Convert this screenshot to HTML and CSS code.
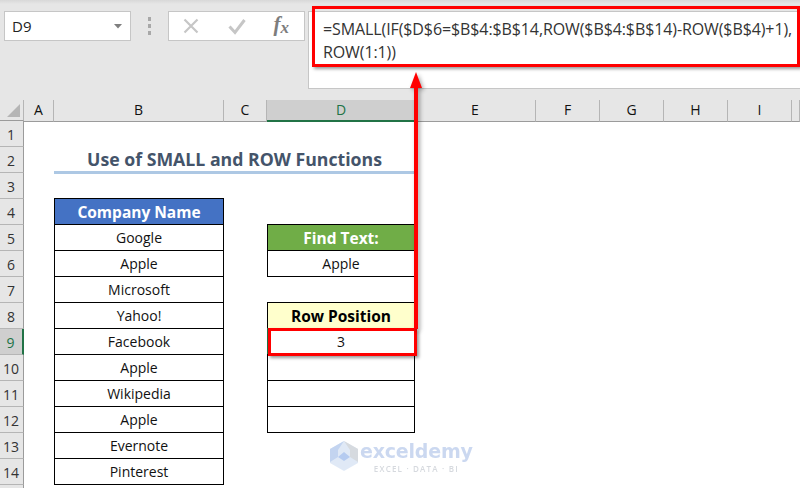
FILE: index.html
```html
<!DOCTYPE html>
<html lang="en">
<head>
<meta charset="utf-8">
<title>Use of SMALL and ROW Functions</title>
<link rel="stylesheet" href="styles.css">
</head>
<body>
<div class="app">
  <div class="ribbon">
    <div class="namebox"><span>D9</span><svg class="caret" width="8" height="5" viewBox="0 0 8 5"><path d="M0 0h8L4 4.500z" fill="#7f7f7f"/></svg></div>
    <div class="grip"><i></i><i></i><i></i></div>
    <div class="fnbox">
      <svg width="18" height="18" viewBox="0 0 18 18"><path d="M2.500 2.500l13 13M15.500 2.500l-13 13" stroke="#c6c6c6" stroke-width="2.200" fill="none"/></svg>
      <svg width="18" height="18" viewBox="0 0 18 18"><path d="M1.500 9.500l5.500 6L16.500 3" stroke="#c6c6c6" stroke-width="3" fill="none"/></svg>
      <span class="fx">f<sub>x</sub></span>
    </div>
    <div class="formula">=SMALL(IF($D$6=$B$4:$B$14,ROW($B$4:$B$14)-ROW($B$4)+1),<br>ROW(1:1))</div>
  </div>
  <div class="sheet">
    <div class="corner"><svg width="13" height="13" viewBox="0 0 13 13"><path d="M13 0v13H0z" fill="#b5b5b5"/></svg></div>
    <div class="colheads">
      <div class="ch">A</div><div class="ch">B</div><div class="ch">C</div><div class="ch active">D</div><div class="ch">E</div><div class="ch">F</div><div class="ch">G</div><div class="ch">H</div><div class="ch">I</div><div class="ch"></div>
    </div>

    <div class="rh">1</div><div class="row"></div>
    <div class="rh">2</div><div class="row"><div class="title">Use of SMALL and ROW Functions</div></div>
    <div class="rh">3</div><div class="row"></div>
    <div class="rh">4</div><div class="row"><div class="cell b head-blue">Company Name</div></div>
    <div class="rh">5</div><div class="row"><div class="cell b">Google</div><div class="cell d head-green">Find Text:</div></div>
    <div class="rh">6</div><div class="row"><div class="cell b">Apple</div><div class="cell d">Apple</div></div>
    <div class="rh">7</div><div class="row"><div class="cell b">Microsoft</div></div>
    <div class="rh">8</div><div class="row"><div class="cell b">Yahoo!</div><div class="cell d head-yellow">Row Position</div></div>
    <div class="rh active">9</div><div class="row"><div class="cell b">Facebook</div><div class="cell d selected">3</div></div>
    <div class="rh">10</div><div class="row"><div class="cell b">Apple</div><div class="cell d"></div></div>
    <div class="rh">11</div><div class="row"><div class="cell b">Wikipedia</div><div class="cell d"></div></div>
    <div class="rh">12</div><div class="row"><div class="cell b">Apple</div><div class="cell d"></div></div>
    <div class="rh">13</div><div class="row"><div class="cell b">Evernote</div></div>
    <div class="rh">14</div><div class="row"><div class="cell b">Pinterest</div></div>
    <div class="rh tail"></div><div class="row"></div>
  </div>

  <div class="callout formula-box"></div>
  <div class="callout cell-box"></div>
  <svg class="arrow" width="24" height="262" viewBox="0 0 24 262"><path d="M12 11V257" stroke="#ff0000" stroke-width="4" fill="none"/><path d="M12 0L18 16H6z" fill="#ff0000"/></svg>

  <div class="mark">
    <svg width="32" height="32" viewBox="0 0 32 32"><path d="M16 1L30 9v14L16 31 2 23V9z" fill="#dbe6f5"/><path d="M16 1L30 9v13l-8-5V10z" fill="#cfd4da"/><path d="M16 1L2 9v13l8-5V10z" fill="#b9cdee"/><path d="M10 17l6-5 6 5-6 4z" fill="#a9c2ee"/></svg>
    <div class="mark-text"><div class="mark-name">exceldemy</div><div class="mark-sub">EXCEL · DATA · BI</div></div>
  </div>
</div>
</body>
</html>
```
FILE: styles.css
```css
* { box-sizing: border-box; }
html, body { margin: 0; padding: 0; }
body { width: 800px; height: 488px; overflow: hidden; background: #fff; font-family: "Open Sans", "Noto Sans", sans-serif; color: #000; }
.app { position: relative; width: 800px; height: 488px; overflow: hidden; }

.ribbon { height: 100px; background: linear-gradient(#d8d8d8 0, #e6e6e6 4px); display: flex; align-items: flex-start; padding: 11px 0 0 4px; }
.namebox { width: 127px; height: 30px; background: #fff; border: 1px solid #c6c6c6; display: flex; align-items: center; justify-content: space-between; padding: 0 8px 0 7px; font-size: 15px; color: #222; }
.grip { width: 37px; height: 30px; display: flex; flex-direction: column; justify-content: center; align-items: center; gap: 3px; }
.grip i { display: block; width: 3px; height: 4px; background: #a8a8a8; }
.fnbox { width: 137px; height: 30px; background: #fff; border: 1px solid #c6c6c6; display: flex; align-items: center; justify-content: space-between; padding: 0 15px 0 13px; }
.fx { font-family: "Liberation Serif", serif; font-style: italic; font-weight: 700; font-size: 21px; color: #7d7d7d; line-height: 1; margin-top: -3px; }
.fx sub { font-size: 17px; vertical-align: -2px; line-height: 0; }
.formula { width: 492px; height: 78px; margin-left: 3px; background: #fff; border: 1px solid #c6c6c6; border-right: 0; padding: 6px 0 0 14px; font-size: 16px; line-height: 23px; letter-spacing: -0.1px; color: #333; white-space: nowrap; }

.sheet { display: grid; grid-template-columns: 24px 776px; grid-template-rows: 21px repeat(14, 26px) 4px; }
.corner { background: #e6e6e6; border-bottom: 1px solid #9b9b9b; border-right: 1px solid #b5b5b5; display: flex; align-items: flex-end; justify-content: flex-end; padding: 0 3px 3px 0; }
.colheads { display: grid; grid-template-columns: 30px 170px 43px 148px 121px 64px 64px 64px 64px 1fr; }
.ch { background: #e6e6e6; border-bottom: 1px solid #9b9b9b; border-right: 1px solid #b5b5b5; font-size: 14px; line-height: 20px; text-align: center; color: #111; }
.ch.active { background: #cfcfcf; border-bottom: 2px solid #217346; border-right: 0; color: #217346; }
.rh { grid-column: 1; background: #e6e6e6; border-bottom: 1px solid #b5b5b5; border-right: 1px solid #9b9b9b; font-size: 14px; line-height: 28px; text-align: center; padding-right: 1px; color: #333; }
.rh.active { background: #cfcfcf; border-right: 2px solid #217346; color: #217346; }
.row { grid-column: 2; display: grid; grid-template-columns: 30px 170px 43px 148px; }
.title { grid-column: 2 / span 3; font-size: 17.700px; font-weight: 700; color: #44546a; text-align: center; line-height: 25px; border-bottom: 3px solid #adc8e4; height: 27px; white-space: nowrap; }
.cell { grid-row: 1; font-size: 14px; line-height: 25px; text-align: center; color: #111; border: 1px solid #000; height: 27px; margin-top: -1px; white-space: nowrap; }
.cell.b { grid-column: 2; }
.cell.d { grid-column: 4; }
.head-blue, .head-green, .head-yellow { font-weight: 700; font-size: 15.500px; line-height: 26px; }
.head-blue { background: #4472c4; color: #fff; }
.head-green { background: #70ad47; color: #fff; }
.head-yellow { background: #ffffcc; color: #000; }
.cell.selected { border-color: #217346; }

.callout { position: absolute; border: 3px solid #ff0000; box-shadow: 2px 2px 3px rgba(0,0,0,.4); }
.formula-box { left: 312px; top: 6px; width: 488px; height: 61px; }
.cell-box { left: 268px; top: 328px; width: 149px; height: 28px; }
.arrow { position: absolute; left: 404px; top: 72px; filter: drop-shadow(2px 2px 2px rgba(0,0,0,.35)); }

.mark { position: absolute; left: 328px; top: 440px; display: flex; align-items: flex-start; opacity: .85; }
.mark-name { font-family: "DejaVu Sans", sans-serif; font-weight: 700; font-size: 19px; line-height: 23px; height: 23px; color: #c3d2ee; letter-spacing: -.2px; }
.mark-sub { font-size: 8px; line-height: 11px; height: 11px; letter-spacing: 1.200px; color: #cfd3d9; font-weight: 600; text-align: center; }
```
